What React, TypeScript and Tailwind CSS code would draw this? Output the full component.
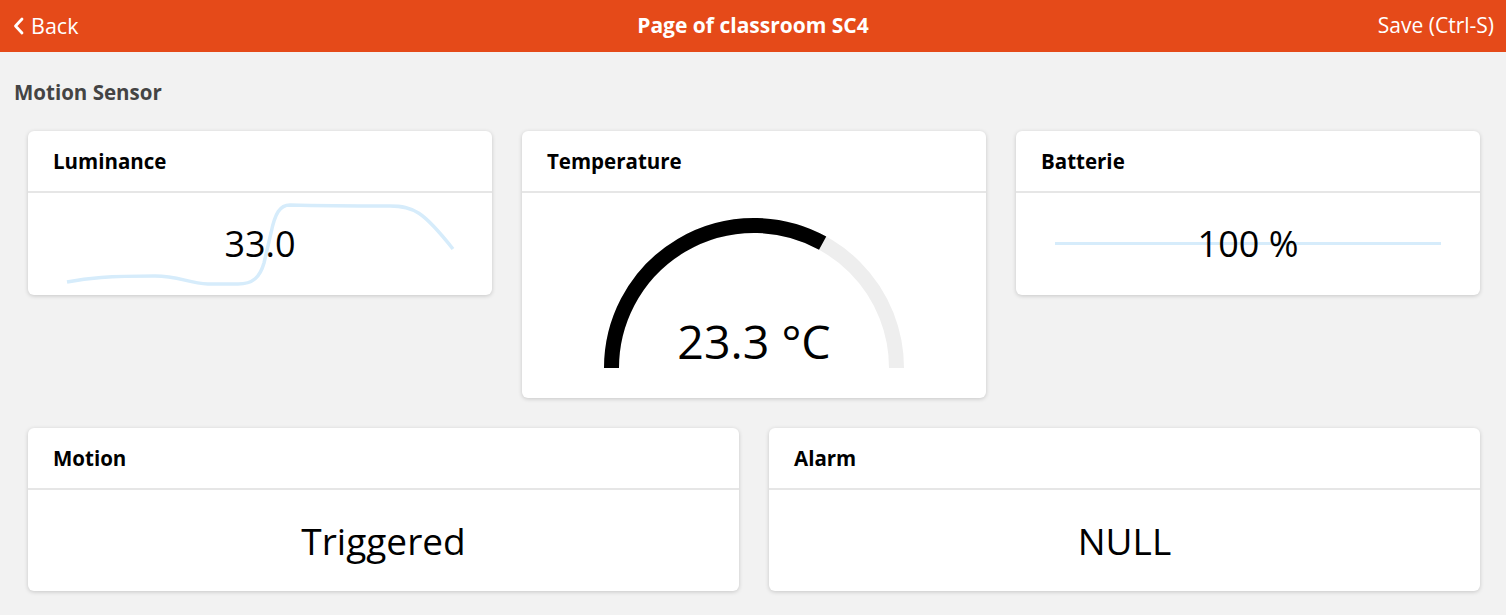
import React from "react";

const font = { fontFamily: '"Open Sans", "Noto Sans", sans-serif' };

function Card({ title, children }: { title: string; children: React.ReactNode }) {
    return (
        <div className="bg-white rounded-md shadow-[0_1px_4px_rgba(0,0,0,0.18)] overflow-hidden">
            <div className="h-[62px] flex items-center px-[25px] border-b-2 border-[#e6e6e6]">
                <span className="text-[20.5px] font-bold text-black">{title}</span>
            </div>
            {children}
        </div>
    );
}

// arc helper for the gauge
const polar = (cx: number, cy: number, r: number, deg: number) => {
    const a = (deg * Math.PI) / 180;
    return [cx + r * Math.cos(a), cy - r * Math.sin(a)];
};

function Gauge({ pct }: { pct: number }) {
    const cx = 150;
    const cy = 152;
    const r = 142.5;
    const end = 180 - 180 * pct;
    const [sx, sy] = polar(cx, cy, r, 180);
    const [ex, ey] = polar(cx, cy, r, end);
    const [fx, fy] = polar(cx, cy, r, 0);
    return (
        <svg width="300" height="152" viewBox="0 0 300 152">
            <path d={`M ${sx} ${sy} A ${r} ${r} 0 0 1 ${fx} ${fy}`} fill="none" stroke="#eeeeee" strokeWidth="15" />
            <path d={`M ${sx} ${sy} A ${r} ${r} 0 0 1 ${ex} ${ey}`} fill="none" stroke="#000" strokeWidth="15" />
        </svg>
    );
}

export default function App() {
    return (
        <div className="min-h-[615px] bg-[#f2f2f2]" style={font}>
            {/* top bar */}
            <div className="h-[52px] bg-[#e54a19] text-white flex items-center justify-between px-[12px] relative">
                <div className="flex items-center gap-[5px] text-[21.5px]">
                    <svg width="14" height="18" viewBox="0 0 14 18">
                        <path d="M10 2 L3.5 9 L10 16" fill="none" stroke="#fff" strokeWidth="2.8" strokeLinecap="round" strokeLinejoin="round" />
                    </svg>
                    <span>Back</span>
                </div>
                <div className="absolute left-0 right-0 text-center text-[21px] font-bold pointer-events-none">
                    Page of classroom SC4
                </div>
                <div className="text-[21px]">Save (Ctrl-S)</div>
            </div>

            <div className="pt-[26px] pl-[14px] text-[20.5px] font-bold text-[#444] leading-[28px]">
                Motion Sensor
            </div>

            <div className="pl-[28px] pr-[26px] pt-[25px] pb-[24px] flex flex-col gap-[30px]">
                <div className="grid grid-cols-3 gap-[30px] items-start">
                    <Card title="Luminance">
                        <div className="h-[102px] relative flex items-center justify-center">
                            <svg className="absolute left-0 top-0" width="464" height="102" viewBox="0 0 464 102">
                                <path
                                    d="M39 89 C 60 85, 80 83, 127 83 C 150 83, 160 90, 180 91 L 210 91 C 225 91, 232 84, 236 70 L 243 40 C 247 20, 252 12, 262 12 C 300 13, 340 13, 362 13 C 385 13, 395 18, 425 56"
                                    fill="none"
                                    stroke="#d6ecfb"
                                    strokeWidth="3.5"
                                />
                            </svg>
                            <span className="relative text-[36px] text-black">33.0</span>
                        </div>
                    </Card>

                    <Card title="Temperature">
                        <div className="h-[205px] relative flex justify-center pt-[23px]">
                            <Gauge pct={0.66} />
                            <span className="absolute left-0 right-0 top-[117px] text-center text-[46.5px] leading-[62px] text-black">23.3 °C</span>
                        </div>
                    </Card>

                    <Card title="Batterie">
                        <div className="h-[102px] relative flex items-center justify-center">
                            <div className="absolute left-[39px] right-[39px] top-[49px] h-[3px] bg-[#d6ecfb]" />
                            <span className="relative text-[36px] text-black">100 %</span>
                        </div>
                    </Card>
                </div>

                <div className="grid grid-cols-2 gap-[30px]">
                    <Card title="Motion">
                        <div className="h-[101px] flex items-center justify-center">
                            <span className="text-[37px] text-black">Triggered</span>
                        </div>
                    </Card>
                    <Card title="Alarm">
                        <div className="h-[101px] flex items-center justify-center">
                            <span className="text-[37px] text-black">NULL</span>
                        </div>
                    </Card>
                </div>
            </div>
        </div>
    );
}
